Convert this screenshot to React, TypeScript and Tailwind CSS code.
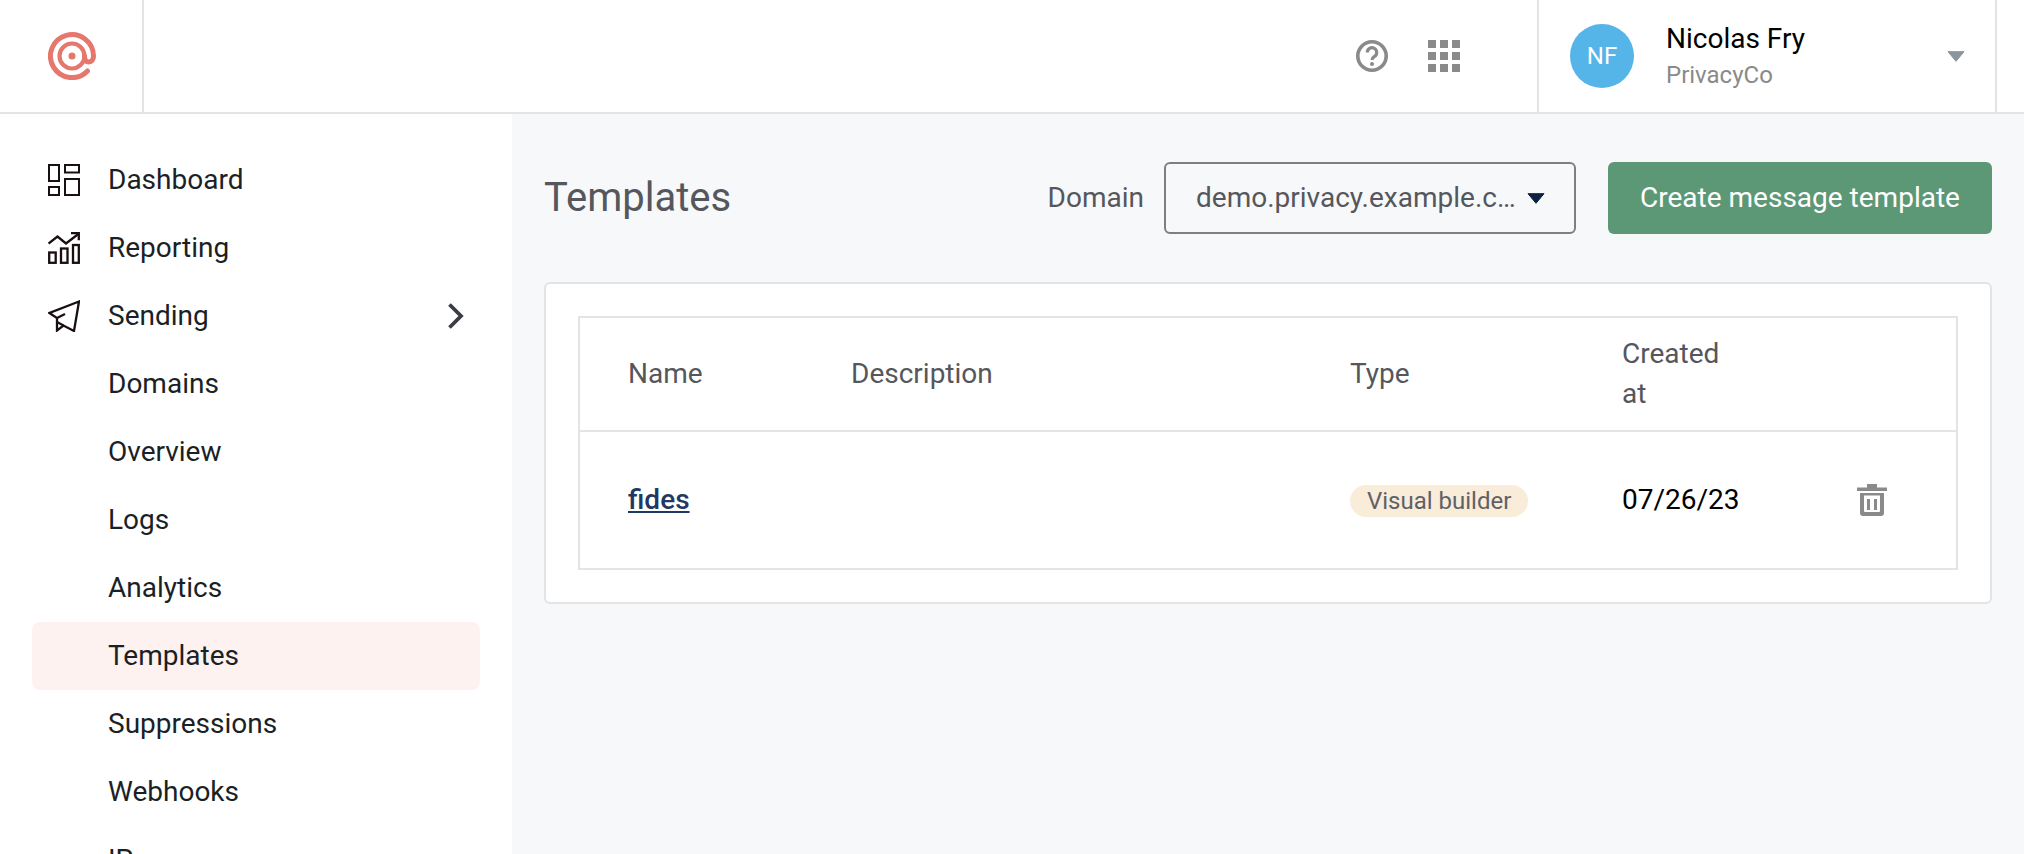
import React from 'react';

const navItems = [
  { label: 'Dashboard', icon: 'dashboard' },
  { label: 'Reporting', icon: 'reporting' },
  { label: 'Sending', icon: 'sending', chevron: true },
  { label: 'Domains' },
  { label: 'Overview' },
  { label: 'Logs' },
  { label: 'Analytics' },
  { label: 'Templates', active: true },
  { label: 'Suppressions' },
  { label: 'Webhooks' },
  { label: 'IPs' },
];

const Logo = () => (
  <svg width="48" height="48" viewBox="0 0 48 48" fill="none" stroke="#E5776D" strokeWidth="5" strokeLinecap="round">
    <path d="M39.500 39A21.500 21.500 0 1 1 45.500 24c0 3.800-2 6-4.700 6S36.500 27.800 36.500 24" />
    <circle cx="24" cy="24" r="12.500" strokeWidth="4.200" />
    <circle cx="24" cy="24" r="3.500" fill="#E5776D" stroke="none" />
  </svg>
);

const NavIcon = ({ name }: { name: string }) => {
  if (name === 'dashboard') {
    return (
      <svg width="32" height="32" viewBox="0 0 32 32" fill="none" stroke="#1A0F10" strokeWidth="2">
        <rect x="1" y="1" width="10" height="16" />
        <rect x="1" y="23" width="10" height="8" />
        <rect x="17" y="1" width="14" height="7.500" />
        <rect x="17" y="15" width="14" height="16" />
      </svg>
    );
  }
  if (name === 'reporting') {
    return (
      <svg width="32" height="32" viewBox="0 0 32 32" fill="none" stroke="#1A0F10" strokeWidth="2.300">
        <rect x="1.200" y="20.500" width="6.500" height="10.300" />
        <rect x="13" y="16.500" width="6.500" height="14.300" />
        <rect x="25" y="13" width="5.800" height="17.800" />
        <path d="M0.500 11.500 9.500 4.500l8.500 7L31 1.500" />
        <path d="M23 1.200h7.800v7" />
      </svg>
    );
  }
  return (
    <svg width="32" height="32" viewBox="0 0 32 32" fill="none" stroke="#1A0F10" strokeWidth="2.300">
      <path d="M31 1.500 1.500 13 9 18V30.500l6.500-5 10.500 5.500 5-29.500Z" />
      <path d="M9 18l8-4M9 22l6.500 3.500" />
    </svg>
  );
};

export default function App() {
  return (
    <div className="h-[854px] overflow-hidden flex flex-col bg-[#F7F8FA] font-['Roboto',sans-serif]">
      <header className="h-[114px] shrink-0 bg-white border-b-2 border-[#E3E4E6] flex">
        <div className="w-[144px] border-r-2 border-[#E3E4E6] flex items-center pl-[48px]">
          <Logo />
        </div>
        <div className="flex-1 flex items-center justify-end gap-[40px] pr-[77px]">
          <svg width="32" height="32" viewBox="0 0 32 32" fill="none">
            <circle cx="16" cy="16" r="14.200" stroke="#8A8A8A" strokeWidth="3.600" />
            <path d="M11.300 12.500a4.700 4.700 0 1 1 7.100 4c-1.500.9-2.400 1.800-2.400 3.500" stroke="#8A8A8A" strokeWidth="3.200" />
            <circle cx="16" cy="24" r="2" fill="#8A8A8A" />
          </svg>
          <div className="grid grid-cols-3 gap-[4px] w-[32px]">
            {Array.from({ length: 9 }).map((_, i) => (
              <div key={i} className="h-[8px] bg-[#8A8A8A]" />
            ))}
          </div>
        </div>
        <div className="w-[460px] border-x-2 border-[#E3E4E6] flex items-center pl-[31px] pr-[30px]">
          <div className="w-[64px] h-[64px] rounded-full bg-[#55B4E8] text-white text-[24px] flex items-center justify-center">NF</div>
          <div className="ml-[32px] flex-1">
            <div className="text-[28px] leading-[38px] text-black">Nicolas Fry</div>
            <div className="text-[24px] leading-[34px] text-[#8A8A8A]">PrivacyCo</div>
          </div>
          <svg width="18" height="11" viewBox="0 0 18 11">
            <path d="M1 .7h16L9 10.300Z" fill="#8B959E" stroke="#8B959E" strokeLinejoin="round" />
          </svg>
        </div>
        <div className="w-[27px]" />
      </header>
      <div className="flex-1 flex min-h-0">
        <aside className="w-[512px] shrink-0 bg-white pt-[32px] pl-[32px] pr-[32px]">
          {navItems.map((item) => (
            <div
              key={item.label}
              className={`h-[68px] flex items-center rounded-[8px] text-[28px] text-[#1B1F26] ${item.active ? 'bg-[#FDF2F0]' : ''}`}
            >
              <div className="w-[32px] h-[32px] ml-[16px] mr-[28px] shrink-0">
                {item.icon && <NavIcon name={item.icon} />}
              </div>
              <span className="flex-1">{item.label}</span>
              {item.chevron && (
                <svg width="18" height="26" viewBox="0 0 18 26" fill="none" className="mr-[16px]">
                  <path d="M3.500 1.500 15 13 3.500 24.500" stroke="#3A3D45" strokeWidth="3.800" />
                </svg>
              )}
            </div>
          ))}
        </aside>
        <main className="flex-1 px-[32px] pt-[48px]">
          <div className="flex items-center h-[72px]">
            <h1 className="flex-1 text-[40px] text-[#55575C]">Templates</h1>
            <span className="text-[28px] text-[#55575C] mr-[20px]">Domain</span>
            <div className="w-[412px] h-[72px] rounded-[6px] border-2 border-[#7D7F85] flex items-center pl-[30px] pr-[29px] mr-[32px]">
              <span className="truncate text-[28px] text-[#55575C] flex-1">demo.privacy.example.com</span>
              <svg width="18" height="11" viewBox="0 0 18 11" className="ml-[6px] shrink-0">
                <path d="M1 .7h16L9 10.300Z" fill="#0B2140" stroke="#0B2140" strokeLinejoin="round" />
              </svg>
            </div>
            <button className="w-[384px] h-[72px] rounded-[6px] bg-[#5C9875] text-white text-[28px]">
              Create message template
            </button>
          </div>
          <div className="mt-[48px] h-[322px] rounded-[6px] bg-white border-2 border-[#E3E4E6] p-[32px]">
            <table className="w-[1380px] table-fixed border-2 border-[#E3E4E6] border-collapse">
              <thead>
                <tr className="h-[114px] border-b-2 border-[#E3E4E6] text-[28px] text-[#55575C] leading-[40px]">
                  <th className="w-[224px] pl-[48px] text-left font-normal">Name</th>
                  <th className="w-[499px] pl-[48px] text-left font-normal">Description</th>
                  <th className="w-[272px] pl-[48px] text-left font-normal">Type</th>
                  <th className="w-[240px] pl-[48px] text-left font-normal">
                    Created
                    <br />
                    at
                  </th>
                  <th />
                </tr>
              </thead>
              <tbody>
                <tr className="h-[138px] text-[28px]">
                  <td className="pl-[48px]">
                    <a className="text-[#1F3864] font-medium underline">fides</a>
                  </td>
                  <td />
                  <td className="pl-[48px]">
                    <span className="inline-flex h-[32px] items-center rounded-full bg-[#F9ECD9] px-[17px] text-[24px] text-[#5F6168]">
                      Visual builder
                    </span>
                  </td>
                  <td className="pl-[48px] text-black">07/26/23</td>
                  <td className="pl-[42px]">
                    <svg width="32" height="32" viewBox="0 0 32 32" fill="#8A8A8A" className="block">
                      <path d="M11 0h10v3.500h10V7H1V3.500h10Z" />
                      <path d="M4 9h24v20a3 3 0 0 1-3 3H7a3 3 0 0 1-3-3Zm4 2.500V27a1 1 0 0 0 1 1h14a1 1 0 0 0 1-1V11.500Z" fillRule="evenodd" />
                      <path d="M11 15h3v11h-3zM18 15h3v11h-3z" />
                    </svg>
                  </td>
                </tr>
              </tbody>
            </table>
          </div>
        </main>
      </div>
    </div>
  );
}
